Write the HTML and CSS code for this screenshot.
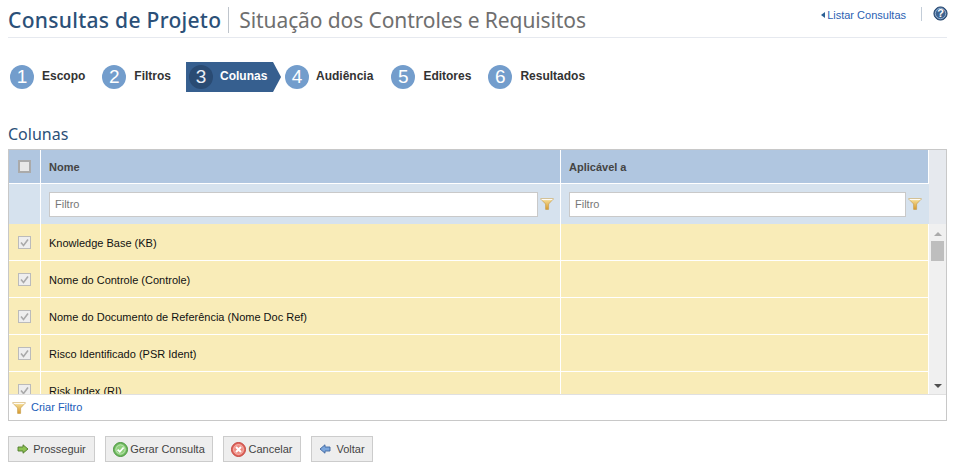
FILE: index.html
```html
<!DOCTYPE html>
<html lang="pt">
<head>
<meta charset="utf-8">
<title>Consultas de Projeto</title>
<link rel="stylesheet" href="styles.css">
</head>
<body>
<svg class="defs" width="0" height="0" aria-hidden="true">
  <defs>
    <linearGradient id="fun" x1="0" y1="0" x2="0" y2="1"><stop offset="0" stop-color="#f7e3a0"/><stop offset="1" stop-color="#d99a2b"/></linearGradient>
    <symbol id="funnel" viewBox="0 0 14 12"><path d="M0.5 0.8H13.5L8.6 6V11.4H5.6V6Z" fill="url(#fun)" stroke="#c9a050" stroke-width=".7"/><path d="M1.5 1.6H12.5" stroke="#fff" stroke-width="1"/></symbol>
  </defs>
</svg>
<header class="top">
  <h1 class="title"><span class="title-main">Consultas de Projeto</span><span class="title-sub">Situação dos Controles e Requisitos</span></h1>
  <div class="top-links">
    <a class="back-link" href="#"><span class="tri"></span>Listar Consultas</a>
    <span class="help-wrap">
      <svg class="help" width="15" height="15" viewBox="0 0 15 15"><circle cx="7.5" cy="7.5" r="6.6" fill="#3e6491" stroke="#27476e" stroke-width="1"/><circle cx="7.5" cy="7.5" r="5.2" fill="none" stroke="#a9c0da" stroke-width=".8"/><text x="7.5" y="11.3" text-anchor="middle" class="help-q">?</text></svg>
    </span>
  </div>
</header>
<nav class="steps">
  <div class="step s1"><span class="num">1</span><span class="lbl">Escopo</span></div>
  <div class="step s2"><span class="num">2</span><span class="lbl">Filtros</span></div>
  <div class="step active"><span class="num">3</span><span class="lbl">Colunas</span></div>
  <div class="step s4"><span class="num">4</span><span class="lbl">Audiência</span></div>
  <div class="step s5"><span class="num">5</span><span class="lbl">Editores</span></div>
  <div class="step s6"><span class="num">6</span><span class="lbl">Resultados</span></div>
</nav>
<h2 class="section">Colunas</h2>
<section class="panel">
  <div class="fixed">
    <div class="row head">
      <div class="c-check"><span class="cb cb-head"></span></div>
      <div class="c-name">Nome</div>
      <div class="c-app">Aplicável a</div>
    </div>
    <div class="row filter">
      <div class="c-check"></div>
      <div class="c-name"><span class="input">Filtro</span><svg class="fn" width="14" height="12"><use href="#funnel"/></svg></div>
      <div class="c-app"><span class="input">Filtro</span><svg class="fn" width="14" height="12"><use href="#funnel"/></svg></div>
    </div>
  </div>
  <div class="scroller">
    <div class="rows">
      <div class="row item"><div class="c-check"><span class="cb"><svg width="11" height="11" viewBox="0 0 11 11"><path d="M2 5.5L4.5 8.5L9 2.5" fill="none" stroke="#aaa" stroke-width="1.6"/></svg></span></div><div class="c-name">Knowledge Base (KB)</div><div class="c-app"></div></div>
      <div class="row item"><div class="c-check"><span class="cb"><svg width="11" height="11" viewBox="0 0 11 11"><path d="M2 5.5L4.5 8.5L9 2.5" fill="none" stroke="#aaa" stroke-width="1.6"/></svg></span></div><div class="c-name">Nome do Controle (Controle)</div><div class="c-app"></div></div>
      <div class="row item"><div class="c-check"><span class="cb"><svg width="11" height="11" viewBox="0 0 11 11"><path d="M2 5.5L4.5 8.5L9 2.5" fill="none" stroke="#aaa" stroke-width="1.6"/></svg></span></div><div class="c-name">Nome do Documento de Referência (Nome Doc Ref)</div><div class="c-app"></div></div>
      <div class="row item"><div class="c-check"><span class="cb"><svg width="11" height="11" viewBox="0 0 11 11"><path d="M2 5.5L4.5 8.5L9 2.5" fill="none" stroke="#aaa" stroke-width="1.6"/></svg></span></div><div class="c-name">Risco Identificado (PSR Ident)</div><div class="c-app"></div></div>
      <div class="row item"><div class="c-check"><span class="cb"><svg width="11" height="11" viewBox="0 0 11 11"><path d="M2 5.5L4.5 8.5L9 2.5" fill="none" stroke="#aaa" stroke-width="1.6"/></svg></span></div><div class="c-name">Risk Index (RI)</div><div class="c-app"></div></div>
    </div>
    <div class="bar">
      <span class="arrow up"></span>
      <span class="thumb"></span>
      <span class="arrow down"></span>
    </div>
  </div>
  <div class="panel-foot"><svg class="fn-foot" width="14" height="12"><use href="#funnel"/></svg><a href="#" class="create">Criar Filtro</a></div>
</section>
<footer class="actions">
  <button class="btn b1" type="button"><svg width="12" height="10" viewBox="0 0 12 10"><path d="M1 3H6V.8L11 5L6 9.2V7H1Z" fill="#8cc152" stroke="#4f7a2a" stroke-width=".9"/></svg>Prosseguir</button>
  <button class="btn b2" type="button"><svg width="15" height="15" viewBox="0 0 15 15"><circle cx="7.5" cy="7.5" r="7" fill="#6fbb5f" stroke="#4c9440"/><circle cx="7.5" cy="7.5" r="4.7" fill="#8fd07c" stroke="#dff3d8" stroke-width=".7"/><path d="M4.6 7.6L6.8 9.8L10.6 5.5" fill="none" stroke="#fff" stroke-width="1.8"/></svg>Gerar Consulta</button>
  <button class="btn b3" type="button"><svg width="15" height="15" viewBox="0 0 15 15"><circle cx="7.5" cy="7.5" r="7" fill="#e2685f" stroke="#c4453e"/><circle cx="7.5" cy="7.5" r="4.9" fill="#ee8a80" stroke="#f9d5d0" stroke-width=".7"/><path d="M5 5L10 10M10 5L5 10" stroke="#fff" stroke-width="2"/></svg>Cancelar</button>
  <button class="btn b4" type="button"><svg width="12" height="10" viewBox="0 0 12 10"><path d="M11 3H6V.8L1 5L6 9.2V7H11Z" fill="#7ba6dc" stroke="#3f66a0" stroke-width=".9"/></svg>Voltar</button>
</footer>
</body>
</html>
```
FILE: styles.css
```css
* { box-sizing: border-box; }
html, body { margin: 0; padding: 0; }
body { width: 961px; height: 466px; overflow: hidden; background: #fff; font-family: "Liberation Sans", Arial, sans-serif; font-size: 11px; color: #111; padding: 0 14px 0 8px; }
.defs { display: block; height: 0; }
.top { display: flex; justify-content: space-between; height: 38px; border-bottom: 1px solid #e6e9ef; padding-top: 7px; }
.title { margin: 0; display: flex; align-items: flex-start; font-weight: 400; font-family: "Noto Sans", "Open Sans", sans-serif; font-size: 21px; line-height: 26px; }
.title-main { color: #2b5078; font-weight: 500; padding-right: 7px; height: 26px; border-right: 1px solid #bfc5cc; letter-spacing: .3px; }
.title-sub { color: #6f6f6f; padding-left: 10px; letter-spacing: -.1px; }
.top-links { display: flex; align-items: flex-start; padding-top: 0; }
.back-link { color: #2b5fb3; text-decoration: none; font-size: 11px; line-height: 15px; display: flex; align-items: center; margin-top: 1px; }
.tri { width: 0; height: 0; border-style: solid; border-width: 3.5px 4px 3.5px 0; border-color: transparent #2b5f94 transparent transparent; margin-right: 2px; margin-top: -2px; }
.help-wrap { margin-left: 15px; border-left: 1px solid #c3cdd8; height: 14px; padding-left: 11px; display: flex; align-items: center; margin-top: 0; width: 26px; }
.help { flex: none; margin-top: -1px; }
.help-q { font: bold 11px "Liberation Sans", sans-serif; fill: #fff; }
.steps { display: flex; align-items: center; height: 30px; margin-top: 24px; padding-left: 2px; }
.step { display: flex; align-items: center; height: 30px; }
.num { width: 24px; height: 24px; border-radius: 50%; background: #739dcc; color: #fff; font: 19px/24px "Liberation Sans", sans-serif; text-align: center; flex: none; }
.lbl { font-size: 12px; font-weight: 700; color: #333; margin-left: 8px; margin-top: -3px; }
.s2 { margin-left: 17px; }
.active { margin-left: 15px; width: 95px; height: 30px; background: #365f8f; clip-path: polygon(0 0, 87px 0, 95px 15px, 87px 100%, 0 100%); padding-left: 3px; }
.active .num { background: #2a4b73; color: #e9eef5; }
.active .lbl { color: #fff; margin-left: 7px; }
.s4 { margin-left: 4px; }
.s4 .lbl { margin-left: 7px; }
.s5 { margin-left: 18px; }
.s6 { margin-left: 17px; }
.section { margin: 32px 0 0; font: 400 16px/20px "Noto Sans", sans-serif; color: #2b5078; height: 25px; }
.panel { width: 939px; border: 1px solid #c8c8c8; height: 272px; display: flex; flex-direction: column; }
.fixed { background: #e6e9ee; height: 74px; flex: none; }
.row { display: grid; grid-template-columns: 32px 520px 368px; width: 920px; }
.row > div { border-right: 1px solid #fff; }
.head { height: 34px; background: #b0c6e0; border-bottom: 1px solid #fff; font-size: 11px; font-weight: 700; color: #444; }
.head > div { display: flex; align-items: center; }
.c-name, .c-app { padding-left: 8px; }
.c-check { display: flex; align-items: center; justify-content: center; }
.cb { width: 13px; height: 13px; border: 1px solid #bbb; background: #eee; display: flex; align-items: center; justify-content: center; flex: none; }
.cb-head { border: 2px solid #aaa; background: #e8e8e8; width: 13px; height: 13px; }
.filter { height: 40px; background: #d6e2ee; }
.filter > div { display: flex; align-items: center; }
.filter > div:last-child { border-right: 0; }
.input { display: block; height: 25px; background: #fff; border: 1px solid #c9c9c9; color: #777; font-size: 11px; line-height: 23px; padding-left: 5px; }
.c-name .input { width: 489px; }
.c-app .input { width: 337px; }
.fn { margin-left: 2px; flex: none; }
.scroller { flex: 1; min-height: 0; display: flex; overflow: hidden; }
.rows { width: 920px; flex: none; overflow: hidden; }
.item { height: 37px; background: #f9ecb8; border-bottom: 1px solid #fff; font-size: 11px; color: #111; }
.item > div { display: flex; align-items: center; }
.item .c-name { padding-top: 1px; }
.bar { width: 17px; flex: 1; background: #f0f0f0; display: flex; flex-direction: column; align-items: center; padding: 8px 0 0; }
.arrow { width: 0; height: 0; border-style: solid; border-color: transparent; flex: none; }
.up { border-width: 0 4px 4px; border-bottom-color: #aaa; }
.down { border-width: 4px 4px 0; border-top-color: #505050; margin-top: 123px; }
.thumb { width: 13px; height: 20px; background: #bebebe; margin-top: 5px; flex: none; }
.panel-foot { height: 26px; flex: none; border-top: 1px solid #e0e0e0; display: flex; align-items: center; padding-left: 3px; background: #fff; }
.fn-foot { margin-top: 1px; }
.create { color: #1a5cb8; text-decoration: none; margin-left: 5px; font-size: 11px; margin-top: -2px; }
.actions { display: flex; margin-top: 15px; gap: 10px; }
.btn { height: 26px; border: 1px solid #ccc; background: #eee; font: 11px "Liberation Sans", sans-serif; color: #444; display: flex; align-items: center; justify-content: center; gap: 4px; padding: 0; }
.b1 { width: 87px; }
.b2 { width: 108px; gap: 2px; }
.b3 { width: 78px; gap: 2px; }
.b4 { width: 62px; gap: 5px; }
```
